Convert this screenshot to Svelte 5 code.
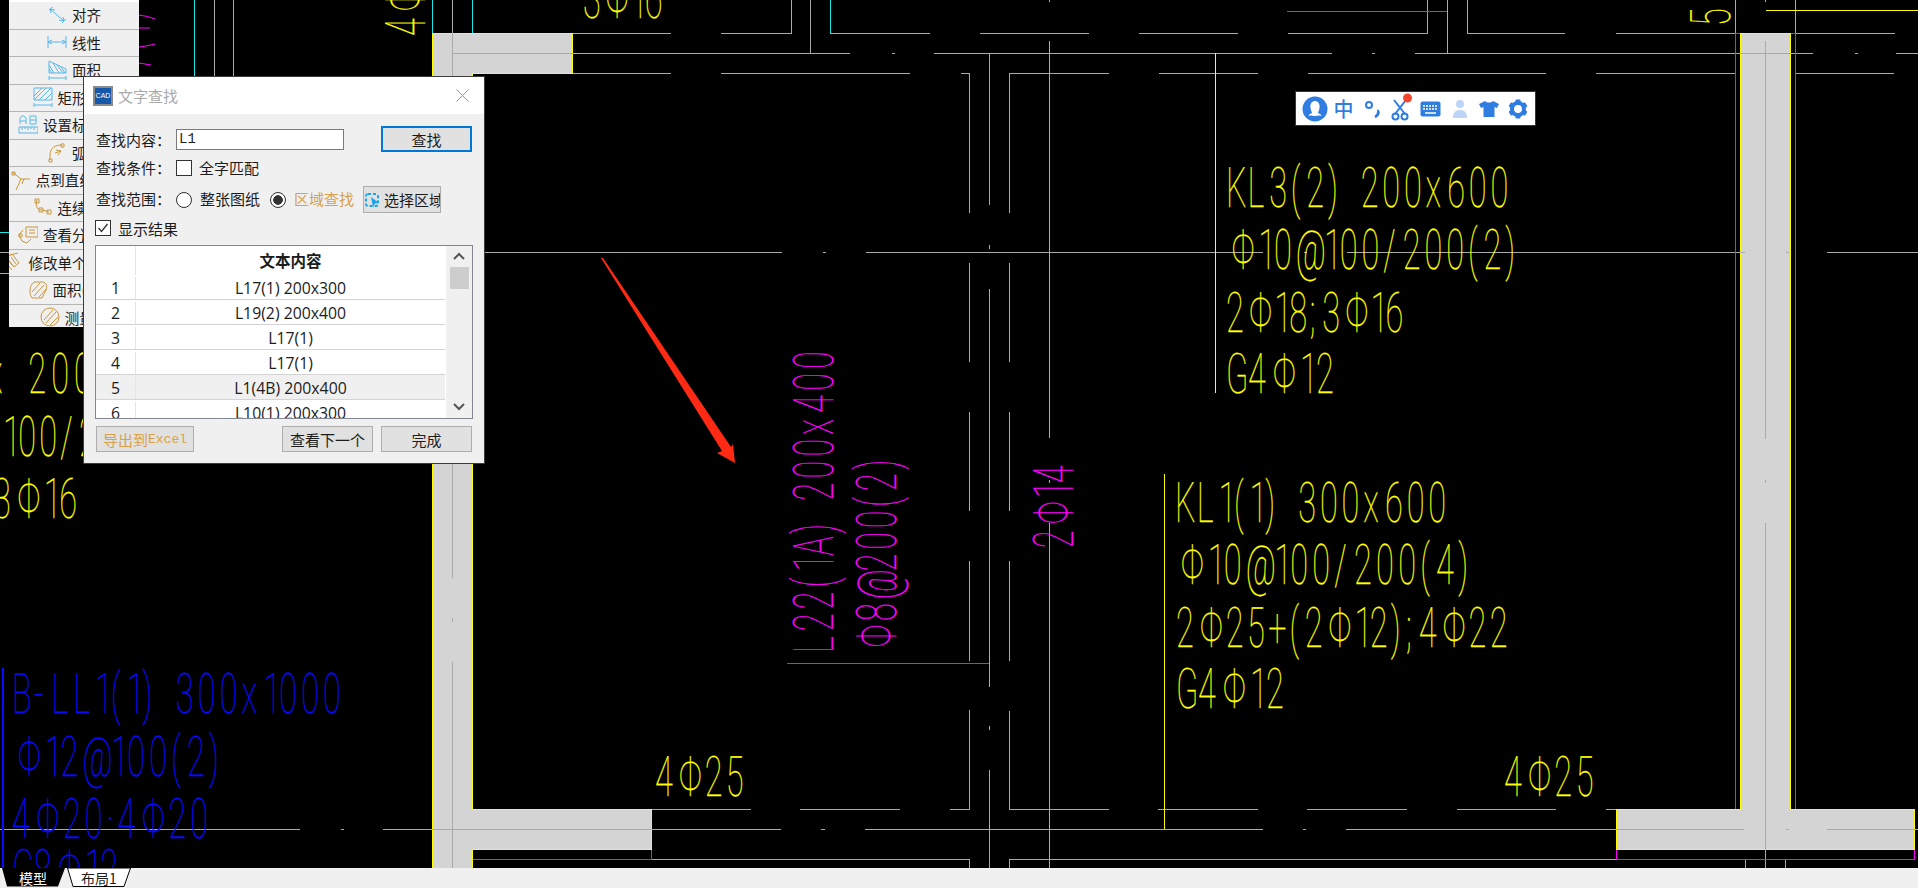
<script lang="ts">
    type Note = { t: string; x: number; y: number; w: number; c: string; r?: number };

    const YEL = "#ffff00";
    const MAG = "#ff00ff";
    const BLU = "#0a0aff";

    // annotations on the drawing, x/y = start of baseline, w = drawn length
    const notes: Note[] = [
        { t: "KL3(2) 200x600", x: 1226, y: 207, w: 286, c: YEL },
        { t: "Φ10@100/200(2)", x: 1229, y: 269, w: 292, c: YEL },
        { t: "2Φ18;3Φ16", x: 1226, y: 332, w: 180, c: YEL },
        { t: "G4Φ12", x: 1226, y: 393, w: 112, c: YEL },
        { t: "KL1(1) 300x600", x: 1175, y: 522, w: 275, c: YEL },
        { t: "Φ10@100/200(4)", x: 1178, y: 584, w: 296, c: YEL },
        { t: "2Φ25+(2Φ12);4Φ22", x: 1176, y: 647, w: 335, c: YEL },
        { t: "G4Φ12", x: 1176, y: 708, w: 112, c: YEL },
        { t: "4Φ25", x: 655, y: 796, w: 92, c: YEL },
        { t: "4Φ25", x: 1504, y: 796, w: 93, c: YEL },
        { t: "3Φ16", x: 583, y: 18, w: 82, c: YEL },
        { t: "x 200", x: -13, y: 393, w: 110, c: YEL },
        { t: "100/200", x: 3, y: 456, w: 139, c: YEL },
        { t: "3Φ16", x: -7, y: 518, w: 88, c: YEL },
        { t: "4Φ16", x: 425, y: 36, w: 90, c: YEL, r: -90 },
        { t: "5", x: 1730, y: 26, w: 14, c: YEL, r: -90 },
        { t: "L22(1A) 200x400", x: 833, y: 653, w: 306, c: MAG, r: -90 },
        { t: "Φ8@200(2)", x: 896, y: 650, w: 196, c: MAG, r: -90 },
        { t: "2Φ14", x: 1073, y: 548, w: 86, c: MAG, r: -90 },
        { t: "B-LL1(1) 300x1000", x: 12, y: 713, w: 333, c: BLU },
        { t: "Φ12@100(2)", x: 15, y: 776, w: 210, c: BLU },
        { t: "4Φ20·4Φ20", x: 12, y: 838, w: 200, c: BLU },
        { t: "G8Φ12", x: 12, y: 889, w: 110, c: BLU },
    ];

    const narrow: Record<string, number> = { "1": 0.72, "(": 0.72, ")": 0.72, " ": 0.8, ";": 0.6, "·": 0.5, "/": 0.9, "-": 0.8, "Φ": 1.35, "@": 1.3 };
    const SX = 0.58;

    function glyphX(n: Note) {
        const chars = [...n.t];
        const units = chars.map((ch) => narrow[ch] ?? 1);
        const total = units.reduce((a, b) => a + b, 0);
        let pos = 0;
        return units
            .map((u, i) => {
                // phi sits centred in its wider cell
                const nudge = chars[i] === "Φ" ? 0.12 : 0;
                const v = ((pos + nudge) / total) * n.w;
                pos += u;
                return (v / SX).toFixed(1);
            })
            .join(" ");
    }

    const cyan =
        "M573 33.5H671M721 33.5H791.5V0M830.5 0V33.5H930M980 33.5H1089M1139 33.5H1238M1288 33.5H1427.5V0M1467.5 0V33.5H1565M1616 33.5H1735.5V0M1795.5 0V33.5H1895" +
        "M573 73.5H671M721 73.5H910M961 73.5H969.5V213M1009.5 213V73.5H1109M1159 73.5H1258M1308 73.5H1546M1596 73.5H1735M1796 73.5H1894" +
        "M969.5 263V362M969.5 412V511M969.5 561V661M969.5 710V809.5H950M1009.5 263V362M1009.5 412V511M1009.5 561V661M1009.5 711V809.5H1109" +
        "M652 809.5H751M800 809.5H900M1158 809.5H1258M1307 809.5H1407M1457 809.5H1556M1606 809.5H1616" +
        "M652 859.5H969.5V868M1009.5 868V859.5H1616M1745.5 859V868M1785.5 859V868" +
        "M194.5 0V76M233.5 0V76M0 232.5H9M0 273.5H9M432.5 0V33M472.5 0V33";
    const grey =
        "M452 53.5H850M892 53.5H895M934 53.5H1332M1372 53.5H1375M1415 53.5H1813M1855 53.5H1858M1896 53.5H1918" +
        "M0 252.5H9M484 252.5H782M823 252.5H826M866 252.5H1263M1304 252.5H1307M1347 252.5H1745M1786 252.5H1789M1827 252.5H1918" +
        "M0 829.5H300M341 829.5H344M383 829.5H781M821 829.5H825M865 829.5H1263M1303 829.5H1306M1346 829.5H1744M1786 829.5H1789M1827 829.5H1918" +
        "M810.5 0V53M1447.5 0V53M214.5 0V76M452.5 0V578M452.5 618V622M452.5 662V868" +
        "M989.5 53V205M989.5 245V249M989.5 289V687M989.5 726V730M989.5 770V868" +
        "M1049.5 0V2M1049.5 41V438M1049.5 480V483M1049.5 523V868" +
        "M1765.5 0V2M1765.5 41V439M1765.5 480V483M1765.5 523V868";
    const magenta =
        "M787 663.5H989M1287 11.5H1447M1735.5 33V809M1795.5 33V809M1735 33.5H1740M1791 33.5H1796" +
        "M1616.5 850V859.5H1914.5V850M473 859.5H651.5V850";
    const yellow = "M1215.5 53V393M1164.5 474V829M1766 10.5H1918";
    const wallLeft = "M432.5 33.5H572.5V73.5H472.5V809.5H651.5V849.5H472.5V868H432.5Z";
    const wallRight = "M1740.5 33.5H1790.5V809.5H1914.5V849.5H1616.5V809.5H1740.5Z";

    const tools = [
        { label: "对齐", icon: "align" },
        { label: "线性", icon: "linear" },
        { label: "面积", icon: "area" },
        { label: "矩形面积", icon: "rect" },
        { label: "设置标注比例", icon: "scale" },
        { label: "弧长", icon: "arc" },
        { label: "点到直线的距离", icon: "point" },
        { label: "连续测量", icon: "chain" },
        { label: "查看分层面积", icon: "layer" },
        { label: "修改单个标注文字", icon: "edit" },
        { label: "面积(含弧)", icon: "blob" },
        { label: "测量圆", icon: "circle" },
    ];

    const toolPaths: Record<string, string> = {
        align: "M2 5L6 2M3 4L17 16M15 18L19 14M3 4L8 5M3 4L4 8M17 16L12 15M17 16L16 12",
        linear: "M1 4V16M19 4V16M1 10H19M1 10L5 8M1 10L5 12M19 10L15 8M19 10L15 12",
        area: "M2 1L19 9V13H2ZM2 5L7 13M2 9L5 13M6 3L12 13M10 5L16 13M14 7L18 13M2 16V20M19 16V20M2 18H19",
        rect: "M1 1H19V13H1ZM1 9L9 1M1 13L13 1M6 13L18 1M12 13L19 6M1 16V20M19 16V20M1 18H19",
        scale: "M1 12H20V18H1ZM4 12V15M7 12V14M10 12V15M13 12V14M16 12V15M2 9V3L4 1H6L8 3V9M2 6H8M12 1H18V9H12ZM12 5H18",
        arc: "M3 18V13C3 6 8 3 15 3M2 17H5V20H2ZM14 2H17V5H14ZM8 11L14 9M11 13L14 9L9 8",
        point: "M1 2L10 9M10 9L5 20M10 9H19M13 9L11 14M1 2H4V5H1Z",
        chain: "M4 3C2 8 4 13 8 13C11 13 13 14 16 15M2 2H6V6H2ZM6 11H10V15H6ZM14 13H18V17H14Z",
        layer: "M8 2H20V12H8ZM11 5H17M11 8H17M5 5L1 10L4 16L9 18L13 14M1 9H4V12H1Z",
        edit: "M2 6L8 2L15 11L10 15ZM4 7L9 14M7 5L12 12M3 12L8 18M6 3L14 1",
        blob: "M6 2H14C19 2 20 8 17 12L14 18H4C1 14 1 6 6 2ZM4 12L12 3M6 16L16 5M11 17L18 9",
        circle: "M10 1A9 9 0 1 1 10 19A9 9 0 1 1 10 1ZM4 13L13 3M6 16L16 5M10 18L18 10",
    };

    const gold = new Set(["arc", "point", "chain", "layer", "edit", "blob", "circle"]);

    const results = [
        { n: 1, t: "L17(1) 200x300" },
        { n: 2, t: "L19(2) 200x400" },
        { n: 3, t: "L17(1)" },
        { n: 4, t: "L17(1)" },
        { n: 5, t: "L1(4B) 200x400", on: true },
        { n: 6, t: "L10(1) 200x300" },
    ];

    const gearTeeth = [0, 60, 120, 180, 240, 300];
</script>

<div class="screen">
    <div class="canvas">
        <svg class="drawing" width="1918" height="868" viewBox="0 0 1918 868">
            <g fill="#d4d4d4" stroke={YEL} shape-rendering="crispEdges">
                <path d={wallLeft} />
                <path d={wallRight} />
            </g>
            <g fill="none" shape-rendering="crispEdges">
                <path d={cyan} stroke="#19e6e6" />
                <path d={grey} stroke="#aaaaaa" />
                <path d={magenta} stroke={MAG} />
                <path d={yellow} stroke={YEL} />
                <path d="M3 668V868" stroke={BLU} stroke-width="2" />
            </g>
            <path d="M139 15Q148 16 155 19M139 28H150M139 47Q148 46 155 44M139 63L151 65" fill="none" stroke={MAG} />

            {#each notes as n}
                <text
                    class="note"
                    x={glyphX(n)}
                    fill={n.c}
                    stroke={n.c}
                    stroke-width="0.25"
                    transform={`translate(${n.x} ${n.y}) rotate(${n.r ?? 0}) scale(${SX} 1)`}>{n.t}</text>
            {/each}

            <polygon points="601,258 603,258 731,447 733,444 735,463 717,453 722,451" fill="#ff2a14" />
        </svg>

        <div class="toolbar">
            {#each tools as tool}
                <div class="tool">
                    <svg class="tool-icon" class:gold={gold.has(tool.icon)} width="20" height="21" viewBox="0 0 20 21">
                        <path d={toolPaths[tool.icon]} fill="none" stroke="currentColor" />
                    </svg>
                    <span>{tool.label}</span>
                </div>
            {/each}
        </div>

        <div class="ime">
            <svg width="26" height="26" viewBox="0 0 26 26">
                <circle cx="13" cy="13" r="12.5" fill="#2f7de1" />
                <path d="M13 5C9 5 8 9 8.500 12C9 15 10 16 10 17C9 18 6 18 7 20C9 19 10 20 13 20C16 20 17 19 19 20C20 18 17 18 16 17C16 16 17 15 17.500 12C18 9 17 5 13 5Z" fill="#fff" />
            </svg>
            <span class="ime-han">中</span>
            <svg width="18" height="20" viewBox="0 0 18 20">
                <circle cx="5" cy="6" r="3" fill="none" stroke="#2f7de1" stroke-width="2" />
                <path d="M13 12C15 12 15 16 11 18" fill="none" stroke="#2f7de1" stroke-width="3" />
            </svg>
            <svg class="ime-cut" width="22" height="28" viewBox="0 0 22 28">
                <g fill="none" stroke="#2f7de1" stroke-width="2">
                    <path d="M3 7L14 21M15 7L4 21" />
                    <circle cx="4.500" cy="23.500" r="3" />
                    <circle cx="13.500" cy="23.500" r="3" />
                </g>
                <circle cx="16.500" cy="5" r="4.500" fill="#f4452f" />
            </svg>
            <svg width="21" height="16" viewBox="0 0 21 16">
                <rect x="0.500" y="0.500" width="20" height="15" rx="2" fill="#2f7de1" />
                <path d="M3 5H18M3 8H18" stroke="#fff" stroke-width="1.500" stroke-dasharray="2 1" />
                <path d="M5 12H16" stroke="#fff" stroke-width="1.500" />
            </svg>
            <svg width="16" height="20" viewBox="0 0 16 20">
                <circle cx="8" cy="5" r="4" fill="#bcd4f5" />
                <path d="M1 19C1 13 4 11 8 11C12 11 15 13 15 19Z" fill="#bcd4f5" />
            </svg>
            <svg width="20" height="18" viewBox="0 0 20 18">
                <path d="M6 1C8 3 12 3 14 1L20 4L18 8L15.500 7V17H4.500V7L2 8L0 4Z" fill="#2f7de1" />
            </svg>
            <svg width="20" height="20" viewBox="0 0 20 20">
                {#each gearTeeth as a}
                    <rect x="7.500" y="0.500" width="5" height="5" rx="1" fill="#2f7de1" transform={`rotate(${a} 10 10)`} />
                {/each}
                <circle cx="10" cy="10" r="6" fill="none" stroke="#2f7de1" stroke-width="4" />
            </svg>
        </div>

        <div class="dialog">
            <header class="title">
                <span class="app-mark">CAD</span>
                <span class="title-text">文字查找</span>
                <svg class="close" width="13" height="13" viewBox="0 0 13 13">
                    <path d="M0.500 0.500L12.500 12.500M12.500 0.500L0.500 12.500" stroke="#999" fill="none" />
                </svg>
            </header>
            <div class="form">
                <div class="row row-find">
                    <span class="label">查找内容：</span>
                    <div class="input">L1</div>
                    <div class="btn primary">查找</div>
                </div>
                <div class="row row-cond">
                    <span class="label">查找条件：</span>
                    <span class="check"></span>
                    <span class="opt">全字匹配</span>
                </div>
                <div class="row row-range">
                    <span class="label">查找范围：</span>
                    <span class="radio"></span>
                    <span class="opt">整张图纸</span>
                    <span class="radio on"></span>
                    <span class="opt accent">区域查找</span>
                    <div class="btn pick">
                        <svg width="15" height="16" viewBox="0 0 15 16">
                            <rect x="1" y="2" width="12" height="12" rx="2" fill="none" stroke="#18a4f0" stroke-width="2" stroke-dasharray="3 2" />
                            <path d="M6 5L14 11L10 11.500L8 15Z" fill="#18a4f0" />
                        </svg>
                        <span>选择区域</span>
                    </div>
                </div>
                <div class="row row-show">
                    <span class="check">
                        <svg width="14" height="14" viewBox="0 0 14 14">
                            <path d="M2.500 7L5.500 10.500L11.500 3" fill="none" stroke="#333" stroke-width="1.300" />
                        </svg>
                    </span>
                    <span class="opt">显示结果</span>
                </div>
                <div class="table">
                    <div class="table-body">
                        <div class="thead">
                            <span class="num"></span>
                            <span class="txt">文本内容</span>
                        </div>
                        {#each results as r}
                            <div class="tr" class:on={r.on}>
                                <span class="num">{r.n}</span>
                                <span class="txt">{r.t}</span>
                            </div>
                        {/each}
                    </div>
                    <div class="scroll">
                        <svg width="12" height="8" viewBox="0 0 12 8"><path d="M1 7L6 2L11 7" fill="none" stroke="#555" stroke-width="2" /></svg>
                        <span class="thumb"></span>
                        <svg class="down" width="12" height="8" viewBox="0 0 12 8"><path d="M1 1L6 6L11 1" fill="none" stroke="#555" stroke-width="2" /></svg>
                    </div>
                </div>
                <div class="row row-foot">
                    <div class="btn export">导出到<span class="mono">Excel</span></div>
                    <div class="btn next">查看下一个</div>
                    <div class="btn done">完成</div>
                </div>
            </div>
        </div>
    </div>

    <div class="tabs">
        <div class="tab">
            <svg width="66" height="19" viewBox="0 0 66 19"><path d="M2 0H65L58 18.500H7Z" fill="#000" /></svg>
            <span class="tab-on">模型</span>
        </div>
        <div class="tab second">
            <svg width="64" height="19" viewBox="0 0 64 19"><path d="M0.500 0H63.500L57 18.500H6Z" fill="#fff" stroke="#000" /></svg>
            <span>布局1</span>
        </div>
    </div>
</div>

<style>
    :global(body) {
        background: #000;
        font-family: "Noto Sans CJK SC", "Liberation Sans", sans-serif;
    }
    .screen {
        width: 1918px;
        height: 888px;
        display: flex;
        flex-direction: column;
        overflow: hidden;
        font-size: 15px;
        line-height: 1;
        color: #1c1c1c;
    }
    .canvas {
        position: relative;
        height: 868px;
        background: #000;
        overflow: hidden;
    }
    .drawing {
        display: block;
    }
    .note {
        font-family: Roboto, "Liberation Sans", sans-serif;
        font-weight: 100;
        font-size: 56px;
        font-kerning: none;
        text-rendering: geometricPrecision;
    }
    .toolbar {
        position: absolute;
        left: 9px;
        top: 0;
        width: 130px;
        height: 327px;
        padding-top: 2px;
        box-sizing: border-box;
        background: #fff;
        overflow: hidden;
        font-size: 14.5px;
    }
    .tool {
        height: 27.5px;
        box-sizing: border-box;
        display: flex;
        align-items: center;
        justify-content: center;
        gap: 5px;
        white-space: nowrap;
        background: #f0f0f0;
        border-bottom: 1px solid #b4b4b4;
    }
    .tool-icon {
        flex: none;
        color: #58b8ea;
    }
    .tool-icon.gold {
        color: #c8973c;
    }
    .ime {
        position: absolute;
        left: 1295px;
        top: 91px;
        width: 241px;
        height: 35px;
        box-sizing: border-box;
        display: grid;
        grid-template-columns: repeat(8, 29px);
        align-items: center;
        justify-items: center;
        padding-left: 4px;
        background: #fff;
        border: 1px solid #1f3864;
    }
    .ime-han {
        color: #2f7de1;
        font-size: 20px;
        font-weight: 500;
    }
    .ime-cut {
        margin-top: -3px;
    }
    .dialog {
        position: absolute;
        left: 83px;
        top: 76px;
        width: 402px;
        height: 388px;
        box-sizing: border-box;
        background: #f0f0f0;
        border: 1px solid #3c3c3c;
    }
    .title {
        height: 37px;
        display: flex;
        align-items: center;
        padding: 0 15px 0 9px;
        background: #fff;
    }
    .app-mark {
        width: 20px;
        height: 20px;
        box-sizing: border-box;
        border: 2px solid #8a8a8a;
        background: #1557a8;
        color: #fff;
        font: 7px "Liberation Sans", sans-serif;
        display: flex;
        align-items: center;
        justify-content: center;
    }
    .title-text {
        margin-left: 5px;
        font-size: 15px;
        color: #aaa;
    }
    .close {
        margin-left: auto;
    }
    .form {
        padding: 12px 12px 0;
        display: flex;
        flex-direction: column;
    }
    .row {
        display: flex;
        align-items: center;
    }
    .label {
        width: 80px;
        flex: none;
        white-space: nowrap;
    }
    .input {
        width: 168px;
        height: 21px;
        box-sizing: border-box;
        border: 1px solid #7a7a7a;
        background: #fff;
        padding-left: 2px;
        display: flex;
        align-items: center;
        font: 14px "Liberation Mono", monospace;
    }
    .btn {
        height: 26px;
        box-sizing: border-box;
        border: 1px solid #adadad;
        background: #e1e1e1;
        display: flex;
        align-items: center;
        justify-content: center;
        white-space: nowrap;
    }
    .primary {
        width: 91px;
        margin-left: 37px;
        border: 2px solid #0078d7;
    }
    .row-cond {
        margin-top: 8px;
        height: 16px;
    }
    .row-cond .opt {
        margin-left: 7px;
    }
    .row-cond .label,
    .row-cond .opt,
    .row-range .label,
    .row-range .opt {
        margin-bottom: 2px;
    }
    .row-range {
        margin-top: 10px;
        height: 27px;
    }
    .row-show {
        margin-top: 7px;
        margin-left: -1px;
        height: 16px;
    }
    .check {
        width: 16px;
        height: 16px;
        box-sizing: border-box;
        border: 1px solid #333;
        background: #fff;
        flex: none;
    }
    .check svg {
        display: block;
    }
    .opt {
        margin-left: 8px;
        white-space: nowrap;
    }
    .row-show .opt {
        margin-left: 7px;
    }
    .radio {
        width: 16px;
        height: 16px;
        box-sizing: border-box;
        border: 1px solid #333;
        border-radius: 50%;
        background: #fff;
        flex: none;
    }
    .radio.on {
        margin-left: 10px;
        background: radial-gradient(circle, #333 0 4.5px, #fff 5px);
    }
    .accent {
        color: #d8a04a;
    }
    .pick {
        width: 78px;
        height: 27px;
        flex: none;
        margin-left: 9px;
        gap: 4px;
        justify-content: flex-start;
        padding-left: 1px;
        overflow: hidden;
    }
    .pick svg {
        flex: none;
    }
    .table {
        margin-top: 9px;
        margin-left: -1px;
        width: 378px;
        height: 174px;
        box-sizing: border-box;
        border: 1px solid #828790;
        background: #fff;
        display: flex;
        overflow: hidden;
    }
    .table-body {
        width: 349px;
        flex: none;
    }
    .thead {
        height: 29px;
        display: flex;
        align-items: center;
        font-weight: 700;
        font-size: 15.5px;
    }
    .tr {
        height: 25px;
        box-sizing: border-box;
        padding-top: 2px;
        display: flex;
        align-items: center;
        font: 15.8px "Open Sans", sans-serif;
        border-bottom: 1px solid #d4d4d4;
    }
    .tr.on {
        background: #f0f0f0;
    }
    .num {
        width: 39px;
        flex: none;
        text-align: center;
        align-self: stretch;
        display: flex;
        align-items: center;
        justify-content: center;
        border-right: 1px solid #e4e4e4;
    }
    .txt {
        flex: 1;
        text-align: center;
    }
    .scroll {
        flex: 1;
        background: #f0f0f0;
        margin-left: 1px;
        display: flex;
        flex-direction: column;
        align-items: center;
        padding-top: 6px;
        box-sizing: border-box;
    }
    .thumb {
        width: 19px;
        height: 22px;
        margin-top: 7px;
        background: #cdcdcd;
    }
    .down {
        margin-top: auto;
        margin-bottom: 7px;
    }
    .row-foot {
        margin-top: 7px;
    }
    .export {
        width: 98px;
        color: #d8a04a;
    }
    .mono {
        font: 13px "Liberation Mono", monospace;
    }
    .next {
        width: 91px;
        margin-left: 88px;
    }
    .done {
        width: 91px;
        margin-left: 8px;
    }
    .tabs {
        height: 20px;
        background: #f0f0f0;
        display: flex;
        font-size: 14px;
    }
    .tab {
        position: relative;
        width: 66px;
        height: 19px;
        display: flex;
        align-items: center;
        justify-content: center;
    }
    .tab svg {
        position: absolute;
        left: 0;
        top: 0;
    }
    .tab span {
        position: relative;
    }
    .tab-on {
        color: #fff;
    }
    .second {
        width: 64px;
        margin-left: 1px;
    }
</style>
